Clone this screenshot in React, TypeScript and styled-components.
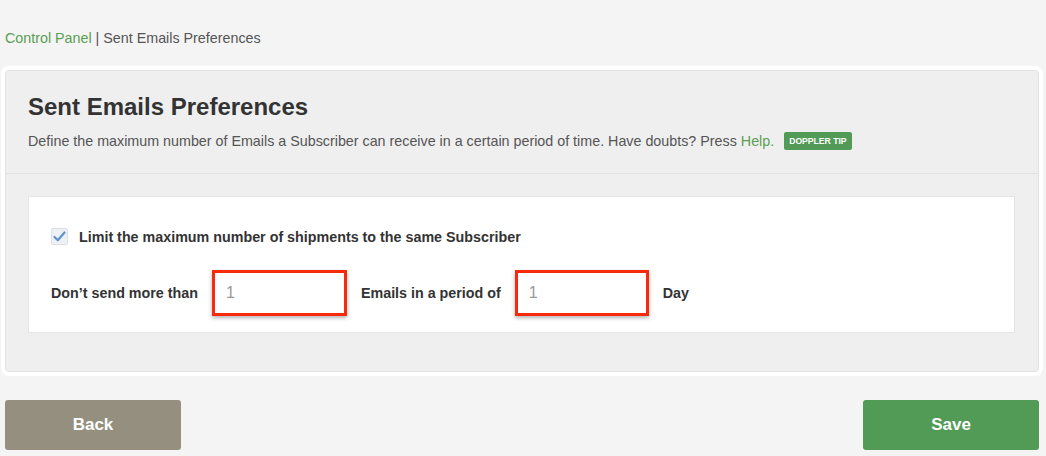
import styled, { createGlobalStyle } from "styled-components";

const GlobalStyle = createGlobalStyle`
  html, body {
    margin: 0;
    padding: 0;
    background: #f4f4f4;
    font-family: "Liberation Sans", Arial, Helvetica, sans-serif;
  }
`;

const Page = styled.div`
  width: 1034px;
  padding: 0 7px 0 5px;
`;

const Breadcrumb = styled.div`
  padding-top: 30px;
  font-size: 14.3px;
  line-height: 17px;
  color: #555;
`;

const Crumb = styled.a`
  color: #5a9e53;
  text-decoration: none;
`;

const Panel = styled.section`
  margin-top: 23px;
  background: #efefef;
  border: 1px solid #e2e2e2;
  border-radius: 4px;
  box-shadow: 0 0 0 4px #fff;
`;

const Header = styled.header`
  padding: 23px 22px 22px;
  border-bottom: 1px solid #e2e2e2;
`;

const Title = styled.h1`
  margin: 0;
  font-size: 24px;
  line-height: 26px;
  font-weight: bold;
  color: #333;
`;

const Description = styled.p`
  margin: 11px 0 0;
  font-size: 14.3px;
  line-height: 20px;
  color: #555;
  display: flex;
  align-items: center;
`;

const HelpLink = styled.a`
  color: #5a9e53;
  text-decoration: none;
  margin-left: 4px;
`;

const Badge = styled.span`
  margin-left: 10px;
  background: #529b57;
  color: #fff;
  font-size: 8.6px;
  font-weight: bold;
  line-height: 18px;
  padding: 0 5px;
  border-radius: 2px;
`;

const Body = styled.div`
  padding: 22px 23px 38px 22px;
`;

const Card = styled.div`
  background: #fff;
  border: 1px solid #e5e5e5;
  padding: 31px 22px 16px;
`;

const CheckRow = styled.label`
  display: flex;
  align-items: center;
  gap: 11px;
  font-size: 14.3px;
  font-weight: bold;
  color: #333;
`;

const CheckBox = styled.span`
  width: 17px;
  height: 17px;
  box-sizing: border-box;
  background: #eef0f3;
  border: 1px solid #dcdfe3;
  border-radius: 2px;
  display: flex;
  align-items: center;
  justify-content: center;
`;

const LimitRow = styled.div`
  display: flex;
  align-items: center;
  gap: 14px;
  margin-top: 25px;
`;

const FieldLabel = styled.span`
  font-size: 14.3px;
  font-weight: bold;
  color: #333;
`;

const NumberInput = styled.div<{ $w: number }>`
  width: ${(p) => p.$w}px;
  height: 46px;
  box-sizing: border-box;
  border: 3px solid #f9290c;
  box-shadow: 0 2px 4px rgba(0, 0, 0, 0.3);
  padding-left: 11px;
  display: flex;
  align-items: center;
  font-size: 16px;
  color: #999;
  background: #fff;
`;

const Actions = styled.div`
  display: flex;
  justify-content: space-between;
  margin-top: 28px;
`;

const Button = styled.button<{ $color: string }>`
  width: 176px;
  height: 50px;
  border: none;
  border-radius: 3px;
  background: ${(p) => p.$color};
  color: #fff;
  font-family: "Liberation Sans", Arial, sans-serif;
  font-size: 17px;
  font-weight: bold;
`;

function App() {
  return (
    <Page>
      <GlobalStyle />
      <Breadcrumb>
        <Crumb href="#">Control Panel</Crumb> | Sent Emails Preferences
      </Breadcrumb>
      <Panel>
        <Header>
          <Title>Sent Emails Preferences</Title>
          <Description>
            Define the maximum number of Emails a Subscriber can receive in a
            certain period of time. Have doubts? Press
            <HelpLink href="#">Help.</HelpLink>
            <Badge>DOPPLER TIP</Badge>
          </Description>
        </Header>
        <Body>
          <Card>
            <CheckRow>
              <CheckBox>
                <svg width="13" height="11" viewBox="0 0 13 11">
                  <path
                    d="M1.5 6 L4.8 9.2 L11.5 1.5"
                    fill="none"
                    stroke="#5d93cf"
                    strokeWidth="2.2"
                    strokeLinecap="round"
                    strokeLinejoin="round"
                  />
                </svg>
              </CheckBox>
              Limit the maximum number of shipments to the same Subscriber
            </CheckRow>
            <LimitRow>
              <FieldLabel>Don’t send more than</FieldLabel>
              <NumberInput $w={135}>1</NumberInput>
              <FieldLabel>Emails in a period of</FieldLabel>
              <NumberInput $w={134}>1</NumberInput>
              <FieldLabel>Day</FieldLabel>
            </LimitRow>
          </Card>
        </Body>
      </Panel>
      <Actions>
        <Button $color="#948f7e">Back</Button>
        <Button $color="#529b57">Save</Button>
      </Actions>
    </Page>
  );
}

export default App;
